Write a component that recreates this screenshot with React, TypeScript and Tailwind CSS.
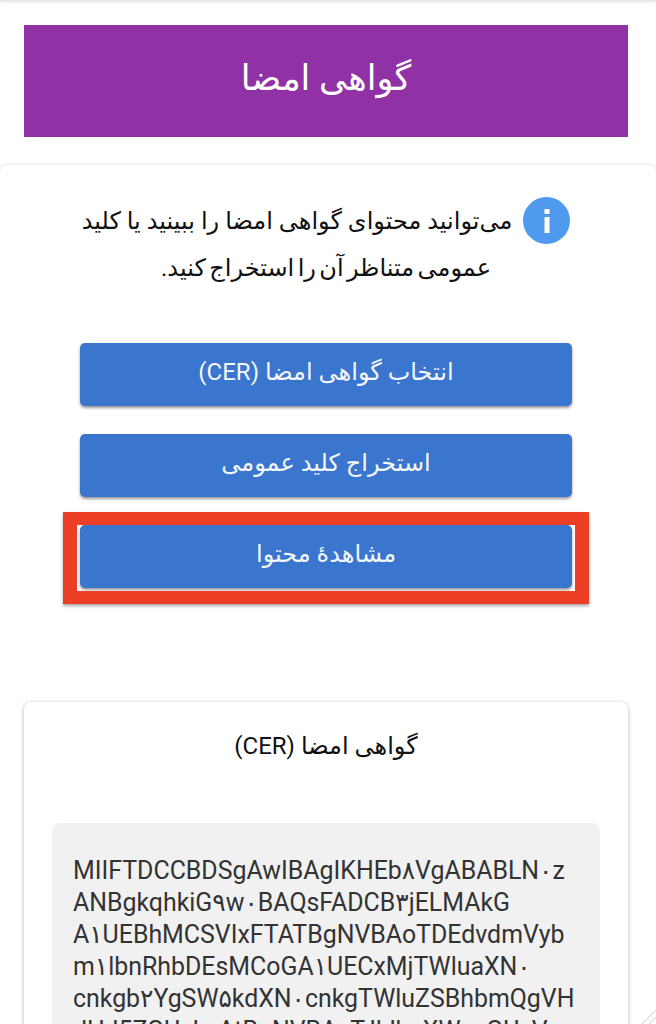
const font = "font-['Roboto','Noto_Sans','DejaVu_Sans',sans-serif]";

function Btn({ children }: { children: React.ReactNode }) {
  return (
    <button className="flex h-[63px] w-full items-center justify-center rounded-[5px] bg-[#3a75ce] pb-1 text-[24px] text-[#f4f7fc] shadow-[0_2px_3px_rgba(0,0,0,0.4)]">
      {children}
    </button>
  );
}

export default function App() {
  return (
    <div dir="rtl" className={`relative h-[1024px] w-[656px] overflow-hidden bg-white ${font}`}>
      <div className="h-px w-full bg-[#e8e8e8] shadow-[0_1px_3px_rgba(0,0,0,0.2)]" />
      <div className="flex flex-col pl-6 pr-[28px] pt-[24px]">
        <div className="flex h-[112px] items-center justify-center bg-[#9031a6] pb-1 text-[35px] text-white">گواهی امضا</div>
      </div>
      <div className="mt-7 flex h-[537px] flex-col rounded-t-lg bg-white pl-20 pr-[84px] pt-[32px] shadow-[0_-1px_3px_rgba(0,0,0,0.1)]">
        <div className="text-center text-[24px] leading-[47px] text-[#111]">
          <span className="ml-[11px] inline-flex h-[47px] w-[47px] items-center justify-center rounded-full bg-[#4f9aee] align-[-4px]">
            <svg width="10" height="24" viewBox="0 0 10 24" fill="white"><rect x="2.5" y="0" width="5" height="5" /><rect x="2.5" y="8" width="5" height="16" /></svg>
          </span>
          می‌توانید محتوای گواهی امضا را ببینید یا کلید{" "}
          <span className="[word-spacing:-2.5px]">عمومی متناظر آن را استخراج کنید.</span>
        </div>
        <div className="mt-[51px] flex flex-col gap-7">
          <Btn>انتخاب گواهی امضا (CER)</Btn>
          <Btn>استخراج کلید عمومی</Btn>
          <div className="relative">
            <Btn>مشاهدهٔ محتوا</Btn>
            <div className="absolute -inset-x-[17px] -bottom-[16px] -top-[13px] border-x-[14px] border-y-[13px] border-[#ec3f25] shadow-[0_2px_3px_rgba(0,0,0,0.35)]" />
          </div>
        </div>
      </div>
      <div className="ml-6 mr-[28px] rounded-lg bg-white px-7 pt-[28px] shadow-[0_1px_4px_rgba(0,0,0,0.3)]">
        <div className="text-center text-[24px] leading-8 text-[#111]">گواهی امضا (CER)</div>
        <div dir="ltr" className="mt-[61px] rounded-lg bg-[#f1f1f1] pl-[21px] pt-[32px] text-[24.9px] leading-8 text-[#333]">
          MIIFTDCCBDSgAwIBAgIKHEb۸VgABABLN۰z<br />
          ANBgkqhkiG۹w۰BAQsFADCB۳jELMAkG<br />
          A۱UEBhMCSVIxFTATBgNVBAoTDEdvdmVyb<br />
          m۱lbnRhbDEsMCoGA۱UECxMjTWluaXN۰<br />
          cnkgb۲YgSW۵kdXN۰cnkgTWluZSBhbmQgVH<br />
          dHJ5ZGUxLzAtBgNVBAsTJlJhaXWz۰GUxV
        </div>
      </div>
      <svg className="absolute bottom-0 right-0" width="16" height="16" viewBox="0 0 16 16" fill="none" stroke="#d0d0d0" strokeWidth="1">
        <path d="M2 16 L16 2 M9 16 L16 9" />
      </svg>
    </div>
  );
}
